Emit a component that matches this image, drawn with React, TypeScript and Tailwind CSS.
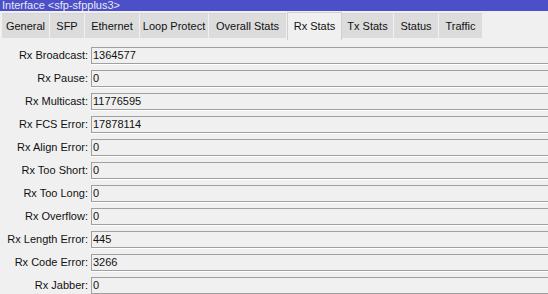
import React from "react";

const tabs: { name: string; w: number; sel?: boolean }[] = [
  { name: "General", w: 48 },
  { name: "SFP", w: 35 },
  { name: "Ethernet", w: 55 },
  { name: "Loop Protect", w: 69 },
  { name: "Overall Stats", w: 78 },
  { name: "Rx Stats", w: 55, sel: true },
  { name: "Tx Stats", w: 52 },
  { name: "Status", w: 45 },
  { name: "Traffic", w: 44 },
];

const rows: [string, string][] = [
  ["Rx Broadcast:", "1364577"],
  ["Rx Pause:", "0"],
  ["Rx Multicast:", "11776595"],
  ["Rx FCS Error:", "17878114"],
  ["Rx Align Error:", "0"],
  ["Rx Too Short:", "0"],
  ["Rx Too Long:", "0"],
  ["Rx Overflow:", "0"],
  ["Rx Length Error:", "445"],
  ["Rx Code Error:", "3266"],
  ["Rx Jabber:", "0"],
];

export default function App() {
  return (
    <div
      className="w-[548px] h-[294px] overflow-hidden bg-[#f0f0f0] text-[11px] text-[#111]"
      style={{ fontFamily: '"Liberation Sans", Arial, sans-serif' }}
    >
      <div className="h-[11px] bg-[#4b4fc8] text-[#e8e8f4] pl-[2px] leading-[10px] overflow-hidden">
        Interface &lt;sfp-sfpplus3&gt;
      </div>
      <div className="flex items-end h-[28px] pl-[2px]">
        {tabs.map((t) =>
          t.sel ? (
            <div
              key={t.name}
              className="h-[28px] bg-[#f0f0f0] border-t border-l border-r border-[#d0d0d0] flex items-center justify-center -mb-[1px] relative z-10"
              style={{ width: t.w }}
            >
              {t.name}
            </div>
          ) : (
            <div
              key={t.name}
              className="h-[25px] bg-[#dcdcdc] border-r border-[#f0f0f0] border-t border-t-[#d6d6d6] flex items-center justify-center mb-[1px]"
              style={{ width: t.w }}
            >
              {t.name}
            </div>
          )
        )}
      </div>
      <div className="flex flex-col gap-[6px] pt-[8px]">
        {rows.map(([l, v]) => (
          <div key={l} className="flex items-center h-[17px]">
            <div className="w-[89px] text-right pr-[1px] shrink-0">{l}</div>
            <div className="ml-[2px] flex-1 h-[17px] border-t border-l border-b border-[#a0a0a0] shadow-[0_1px_0_#ffffff] flex items-center pl-[1px] leading-none">
              {v}
            </div>
          </div>
        ))}
      </div>
    </div>
  );
}
